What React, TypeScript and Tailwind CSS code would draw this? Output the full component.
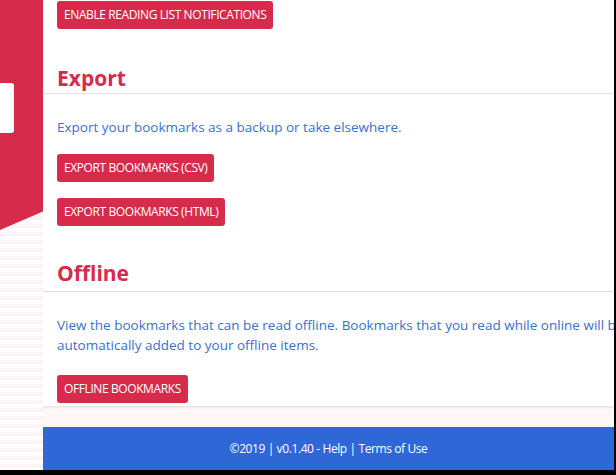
export default function App() {
  const btn =
    "bg-[#d72b4c] text-white text-[12px] tracking-[-0.4px] px-[7px] h-[28px] flex items-center rounded-[3px] w-fit";
  return (
    <div className="w-[616px] h-[475px] bg-black overflow-hidden" style={{ fontFamily: '"Open Sans", sans-serif' }}>
      <div className="flex h-[470px] w-[614px]">
        <div className="w-[43px] shrink-0 flex flex-col bg-[repeating-linear-gradient(#fdf3f4_0px,#fdf3f4_4px,#fff_4px,#fff_8px)] relative">
          <div className="h-[230px] bg-[#d72b4c] [clip-path:polygon(0_0,100%_0,100%_92%,0_100%)] relative">
            <div className="absolute left-0 top-[83px] w-[14px] h-[50px] bg-white rounded-r-[3px]" />
          </div>
        </div>
        <div className="flex-1 min-w-0 flex flex-col bg-[#fdf7f8]">
          <div className="bg-white h-[406px] shadow-[0_1px_3px_rgba(0,0,0,0.12)] flex flex-col">
            <div className="px-[14px] pt-[1px]">
              <div className={btn}>ENABLE READING LIST NOTIFICATIONS</div>
            </div>
            <div className="px-[14px] mt-[35px] text-[21px] font-bold text-[#d72b4c] h-[29px] leading-[29px]">Export</div>
            <div className="border-b border-[#eadfe3]" />
            <div className="px-[14px] mt-[23px] text-[13.5px] text-[#3d6fcb] leading-[20px]">Export your bookmarks as a backup or take elsewhere.</div>
            <div className="px-[14px] mt-[17px] flex flex-col gap-[16px]">
              <div className={btn}>EXPORT BOOKMARKS (CSV)</div>
              <div className={btn}>EXPORT BOOKMARKS (HTML)</div>
            </div>
            <div className="px-[14px] mt-[33px] text-[21px] font-bold text-[#d72b4c] h-[29px] leading-[29px]">Offline</div>
            <div className="border-b border-[#f0d6dd] mt-[3px]" />
            <div className="px-[14px] mt-[23px] text-[13.5px] text-[#3d6fcb] leading-[20px] whitespace-nowrap overflow-hidden">
              View the bookmarks that can be read offline. Bookmarks that you read while online will be
              <br />
              automatically added to your offline items.
            </div>
            <div className="px-[14px] mt-[20px]">
              <div className={btn}>OFFLINE BOOKMARKS</div>
            </div>
          </div>
          <div className="mt-[21px] flex-1 bg-[#2f67d7] flex items-center justify-center text-white text-[12px] tracking-[-0.4px]">
            ©2019 | v0.1.40 - Help | Terms of Use
          </div>
        </div>
      </div>
    </div>
  );
}
